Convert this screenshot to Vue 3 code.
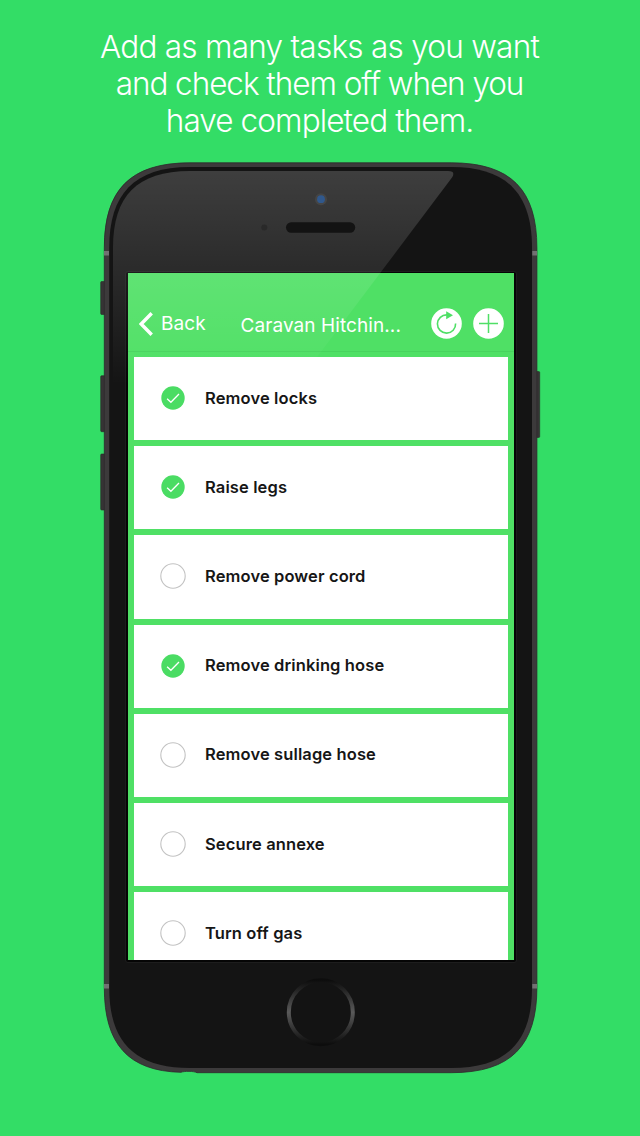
<script setup>
const headline = ['Add as many tasks as you want', 'and check them off when you', 'have completed them.']
const tasks = [
  { name: 'Remove locks', done: true },
  { name: 'Raise legs', done: true },
  { name: 'Remove power cord', done: false },
  { name: 'Remove drinking hose', done: true },
  { name: 'Remove sullage hose', done: false },
  { name: 'Secure annexe', done: false },
  { name: 'Turn off gas', done: false },
]
</script>

<template>
  <main class="page">
    <h1 class="headline">
      <span v-for="(line, i) in headline" :key="line" :class="'line' + (i + 1)">{{ line }}</span>
    </h1>

    <section class="phone">
      <svg class="body" viewBox="100 162 441 912" width="441" height="912" aria-hidden="true">
        <defs>
          <linearGradient id="ring" x1="0" x2="0" y1="0" y2="1">
            <stop offset="0" stop-color="#0d0d0d" />
            <stop offset="0.5" stop-color="#5a5a5a" />
            <stop offset="1" stop-color="#0d0d0d" />
          </linearGradient>
        </defs>
        <!-- side buttons -->
        <g fill="#363435" stroke="#2b292a" stroke-width="0.6">
          <rect x="100.7" y="281.5" width="6" height="33" rx="1" />
          <rect x="100.7" y="375.7" width="6" height="56" rx="1" />
          <rect x="100.7" y="454" width="6" height="56" rx="1" />
          <rect x="534" y="371.5" width="5.7" height="66" rx="1" />
        </g>
        <!-- metal frame -->
        <path d="M104.3 248C104.3 190 130 162.8 190 162.8H451.2C511.2 162.8 536.9 190 536.9 248V987.5C536.9 1045.5 511.2 1072.7 451.2 1072.7H197C194 1071 184 1071 181 1072.3C128 1071 104.3 1044 104.3 987.5Z" fill="#3c3a3b" stroke="#2d2a2c" stroke-width="0.8" />
        <path d="M104 251h5v4.500h-5zM532.300 251h4.700v4.500h-4.700zM104 984h5v4.500h-5zM532.300 984h4.700v4.500h-4.700z" fill="#727072" />
        <path d="M109.2 248C109.2 194 134 167 190 167H451.2C507.2 167 532 194 532 248V987.5C532 1041.5 507.2 1068 451.2 1068H190C134 1068 109.2 1041.5 109.2 987.5Z" fill="#141414" />
        <rect x="125.5" y="271.5" width="391" height="691" rx="2.5" fill="#050505" stroke="#252525" stroke-width="0.7" />
        <!-- home button -->
        <circle cx="320.8" cy="1012.3" r="32" fill="#131313" stroke="url(#ring)" stroke-width="4" />
      </svg>

      <div class="screen">
        <header class="navbar">
          <svg class="chevron" viewBox="0 0 14 24" width="14" height="24"><path d="M12.700 1.200 2.200 12l10.500 10.800" fill="none" stroke="#fff" stroke-width="3.400" /></svg>
          <span class="back">Back</span>
          <span class="title">Caravan Hitchin...</span>
          <svg class="action reset" viewBox="0 0 31 31" width="31" height="31">
            <circle cx="15.5" cy="15.5" r="15.3" fill="#fff" />
            <path d="M24.600 15.500A9.100 9.100 0 1 1 16 6.900" fill="none" stroke="#4fdf66" stroke-width="1.600" />
            <path d="M15.200 3.200 22 7.200 15.200 11.300Z" fill="#4fdf66" />
          </svg>
          <svg class="action" viewBox="0 0 31 31" width="31" height="31">
            <circle cx="15.5" cy="15.5" r="15.3" fill="#fff" />
            <path d="M6 15.500H25M15.500 6V25" stroke="#4fdf66" stroke-width="1.500" />
          </svg>
        </header>
        <ul class="tasks">
          <li v-for="task in tasks" :key="task.name" class="task">
            <svg class="mark" viewBox="0 0 26 26" width="26" height="26">
              <template v-if="task.done">
                <circle cx="13" cy="13" r="11.7" fill="#4adc63" />
                <path d="M7.100 13.700 10.900 17.300 19 9" fill="none" stroke="#fff" stroke-width="1.300" />
              </template>
              <circle v-else cx="13" cy="13" r="12.2" fill="#fff" stroke="#c3c3c3" stroke-width="1.1" />
            </svg>
            <span class="name">{{ task.name }}</span>
          </li>
        </ul>
      </div>

      <svg class="glare" viewBox="100 162 441 912" width="441" height="912" aria-hidden="true">
        <defs>
          <linearGradient id="shine" gradientUnits="userSpaceOnUse" x1="0" x2="0" y1="171" y2="385">
            <stop offset="0" stop-color="#fff" stop-opacity="0.18" />
            <stop offset="1" stop-color="#fff" stop-opacity="0" />
          </linearGradient>
        </defs>
        <path d="M113 248C113 196 137 171 190 171H448Q456 171 452 177.500L296 385H113Z" fill="url(#shine)" />
        <circle cx="264.3" cy="227.5" r="3" fill="#292929" />
        <rect x="286" y="222.3" width="69.2" height="10.5" rx="5.2" fill="#131313" />
        <circle cx="321" cy="199.2" r="6" fill="#454545" />
        <circle cx="321" cy="199.2" r="3.9" fill="#30588c" />
      </svg>
    </section>
  </main>
</template>

<style>
body {
  background: #33dd66;
}
</style>

<style scoped>
.page {
  box-sizing: border-box;
  width: 640px;
  height: 1136px;
  padding-top: 28px;
  overflow: hidden;
  background: #33dd66;
  font-family: Inter, "Liberation Sans", sans-serif;
}
.headline {
  display: flex;
  flex-direction: column;
  align-items: center;
  height: 134px;
  margin: 0 1px 0 0;
  color: #fff;
  font-size: 31.5px;
  font-weight: 300;
  line-height: 37px;
  white-space: nowrap;
}
.line1 { letter-spacing: -0.74px; }
.line2 { letter-spacing: -1.05px; }
.line3 { letter-spacing: -0.9px; }
.phone {
  position: relative;
  box-sizing: border-box;
  width: 441px;
  height: 912px;
  margin-left: 100px;
  padding: 111px 27px 0 28px;
}
.body,
.glare {
  position: absolute;
  top: 0;
  left: 0;
}
.glare {
  pointer-events: none;
}
.screen {
  position: relative;
  width: 386px;
  height: 687px;
  overflow: hidden;
  background: #4fe065;
}
.navbar {
  display: flex;
  align-items: center;
  box-sizing: border-box;
  height: 79px;
  padding: 23px 10px 0 11px;
  border-bottom: 1px solid #48d35e;
  color: #fff;
  font-size: 19px;
  font-weight: 400;
  letter-spacing: 0.08px;
  white-space: nowrap;
}
.chevron {
  flex: none;
}
.back {
  width: 72px;
  margin-left: 8px;
  flex: none;
}
.title {
  width: 190px;
  margin: 3px 0 0 7.5px;
  flex: none;
}
.action {
  flex: none;
}
.reset {
  margin-right: 11.3px;
}
.tasks {
  display: flex;
  flex-direction: column;
  gap: 6px;
  margin: 0;
  padding: 5px 6px 0;
  list-style: none;
}
.task {
  display: flex;
  align-items: center;
  flex: none;
  box-sizing: border-box;
  height: 83.2px;
  padding: 0 0 1px 26px;
  background: #fff;
}
.name {
  margin: 0 0 1px 19px;
  color: #161616;
  font-size: 16.5px;
  font-weight: 600;
  letter-spacing: 0.12px;
  white-space: nowrap;
}
</style>
